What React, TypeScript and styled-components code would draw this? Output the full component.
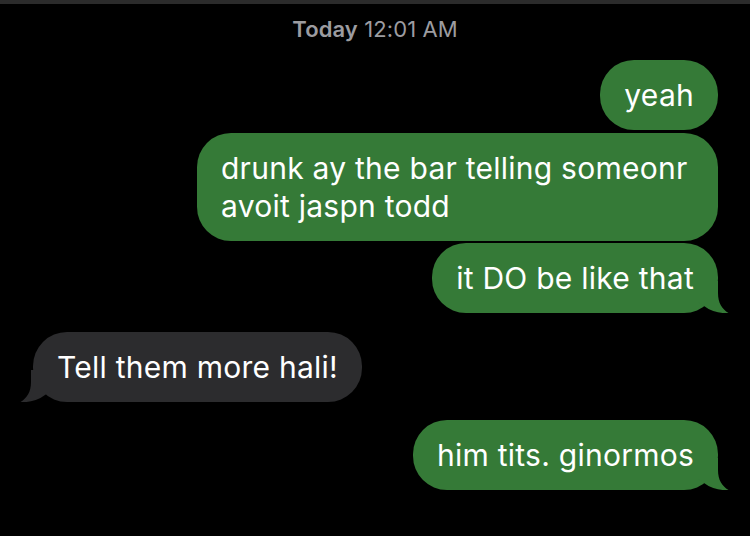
import React from 'react';
import styled, { createGlobalStyle } from 'styled-components';

const Global = createGlobalStyle`
  html, body { margin: 0; padding: 0; background: #000; }
  body { font-family: Inter, "Noto Sans", sans-serif; -webkit-font-smoothing: antialiased; }
`;

const Screen = styled.div`
  width: 750px;
  height: 536px;
  box-sizing: border-box;
  background: #000;
  border-top: 4px solid #2b2b2b;
  overflow: hidden;
  display: flex;
  flex-direction: column;
`;

const Stamp = styled.div`
  text-align: center;
  color: #9c9ca0;
  font-size: 22px;
  line-height: 26px;
  padding-top: 12px;
  letter-spacing: 0.1px;
  b { font-weight: 600; }
`;

const Thread = styled.div`
  display: flex;
  flex-direction: column;
  padding: 18px 32px 0 33px;
`;

const Bubble = styled.div<{ $sent: boolean; $gap: number }>`
  position: relative;
  align-self: ${(p) => (p.$sent ? 'flex-end' : 'flex-start')};
  margin-top: ${(p) => p.$gap}px;
  max-width: 521px;
  box-sizing: border-box;
  padding: 16px 24px 16px;
  border-radius: 34px;
  background: ${(p) => (p.$sent ? '#357a37' : '#2c2c2e')};
  color: #fff;
  font-size: 30px;
  letter-spacing: 0.25px;
  line-height: 38px;
`;

const Tail = styled.svg<{ $sent: boolean }>`
  position: absolute;
  bottom: 0;
  width: 32px;
  height: 32px;
  ${(p) => (p.$sent ? 'right: -11px;' : 'left: -13px; transform: scaleX(-1);')}
`;

type Msg = { text: string; sent: boolean; gap: number; tail: boolean };

const messages: Msg[] = [
  { text: 'yeah', sent: true, gap: 0, tail: false },
  { text: 'drunk ay the bar telling someonr avoit jaspn todd', sent: true, gap: 3, tail: false },
  { text: 'it DO be like that', sent: true, gap: 2, tail: true },
  { text: 'Tell them more hali!', sent: false, gap: 19, tail: true },
  { text: 'him tits. ginormos', sent: true, gap: 18, tail: true },
];

function BubbleTail({ sent }: { sent: boolean }) {
  const fill = sent ? '#357a37' : '#2c2c2e';
  return (
    <Tail $sent={sent} viewBox="0 0 32 32" aria-hidden>
      <path
        d="M21 0 L21 12 C21 22 25 28 31.5 32 C24 32.6 15 31 7 25 L0 20 L0 0 Z"
        fill={fill}
      />
    </Tail>
  );
}

export default function App() {
  return (
    <>
      <Global />
      <Screen>
        <Stamp>
          <b>Today</b> 12:01 AM
        </Stamp>
        <Thread>
          {messages.map((m, i) => (
            <Bubble key={i} $sent={m.sent} $gap={m.gap}>
              {m.text}
              {m.tail && <BubbleTail sent={m.sent} />}
            </Bubble>
          ))}
        </Thread>
      </Screen>
    </>
  );
}
